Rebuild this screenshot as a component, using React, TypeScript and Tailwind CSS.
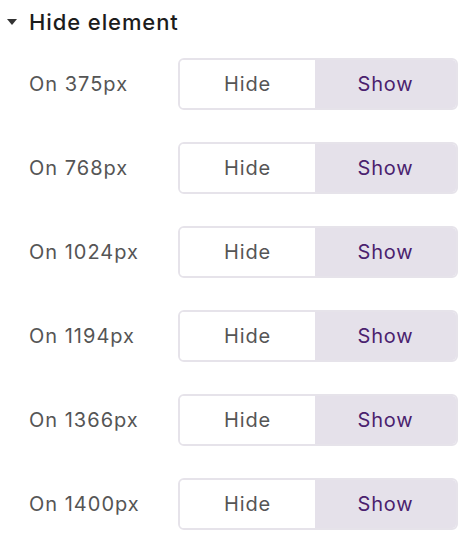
const sizes = ['375px', '768px', '1024px', '1194px', '1366px', '1400px'];

function Toggle() {
  return (
    <div className="flex h-[52px] w-[280px] overflow-hidden rounded-[6px] border-2 border-[#e6e3ea]">
      <button className="flex-1 bg-white text-[20px] tracking-[0.8px] text-[#555555]">Hide</button>
      <button className="w-[141px] bg-[#e5e1ea] text-[20px] tracking-[0.8px] text-[#4b1f6f]">Show</button>
    </div>
  );
}

export default function App() {
  return (
    <div className="min-h-screen bg-white" style={{ fontFamily: 'Inter, sans-serif' }}>
      <div className="flex h-[44px] items-center pl-[7px]">
        <svg width="10" height="6" viewBox="0 0 10 6" className="mr-[12px]">
          <path d="M0 0h10L5 6z" fill="#333" />
        </svg>
        <span className="text-[22px] font-medium tracking-[0.9px] text-[#1c1c1c]">Hide element</span>
      </div>
      <div className="mt-[14px] flex flex-col gap-[32px] pl-[29px]">
        {sizes.map((s) => (
          <div key={s} className="flex items-center">
            <span className="w-[149px] text-[20px] tracking-[1px] text-[#555555]">On {s}</span>
            <Toggle />
          </div>
        ))}
      </div>
    </div>
  );
}
